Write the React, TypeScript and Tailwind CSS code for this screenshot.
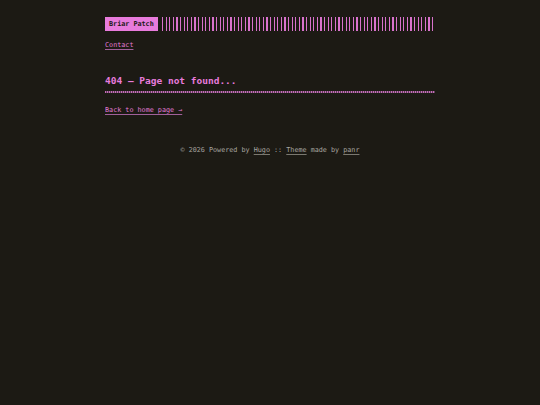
export default function App() {
  return (
    <div className="min-h-[405px] bg-[#1c1a14] font-['DejaVu_Sans_Mono',monospace] text-[6.75px] leading-[1.55] text-[#a8a6a0]">
      <div className="mx-auto w-[330px] pt-[17px]">
        {/* Header */}
        <header>
          <div className="flex items-stretch gap-[4px]">
            <a
              href="#"
              className="flex h-[14px] items-center bg-[#e87bdc] px-[4px] font-bold text-[#1c1a14]"
            >
              Briar Patch
            </a>
            <div className="h-[14px] flex-1 bg-[repeating-linear-gradient(90deg,#d872cc_0_1.2px,transparent_1.2px_3.6px)]" />
          </div>
          <nav className="mt-[9px]">
            <a
              href="#"
              className="text-[#e07ad4] underline decoration-[#a0609a] underline-offset-[1.5px]"
            >
              Contact
            </a>
          </nav>
        </header>

        {/* Main */}
        <main className="mt-[24px]">
          <h1 className="text-[9.5px] font-bold leading-[1.4] text-[#e87bdc]">
            404 — Page not found...
          </h1>
          <div className="mt-[3px] h-[2px] bg-[repeating-linear-gradient(90deg,#c46ab9_0_1px,#5e3f58_1px_2px)]" />
          <a
            href="#"
            className="mt-[12px] inline-block text-[#e07ad4] underline decoration-[#a0609a] underline-offset-[1.5px]"
          >
            Back to home page →
          </a>
        </main>

        {/* Footer */}
        <footer className="mt-[30px] text-center">
          © 2026 Powered by{' '}
          <a href="#" className="underline decoration-[#7a7870] underline-offset-[1.5px]">
            Hugo
          </a>{' '}
          ::{' '}
          <a href="#" className="underline decoration-[#7a7870] underline-offset-[1.5px]">
            Theme
          </a>{' '}
          made by{' '}
          <a href="#" className="underline decoration-[#7a7870] underline-offset-[1.5px]">
            panr
          </a>
        </footer>
      </div>
    </div>
  )
}
